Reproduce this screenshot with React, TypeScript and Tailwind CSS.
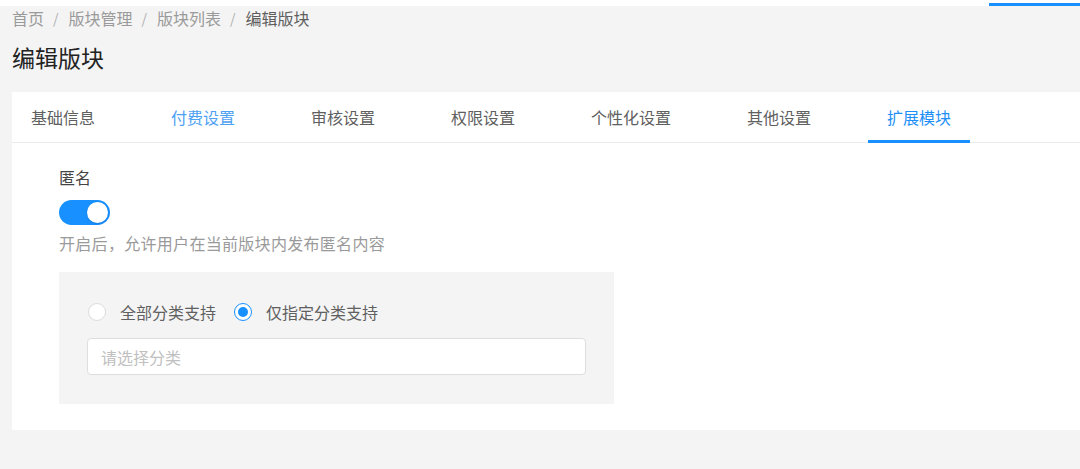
import { useState } from 'react';

const TABS = ['基础信息', '付费设置', '审核设置', '权限设置', '个性化设置', '其他设置', '扩展模块'];

const FONT = { fontFamily: '"Noto Sans CJK SC", "Noto Sans", sans-serif' };

function Breadcrumb() {
  const items = ['首页', '版块管理', '版块列表', '编辑版块'];
  return (
    <div className="flex h-6 items-center px-3 text-base leading-6 text-[#9a9a9a]">
      {items.map((item, i) => (
        <span key={item} className="flex items-center">
          {i > 0 && <span className="ml-[9px] mr-[10px] text-sm text-[#b0b0b0]">/</span>}
          <span className={i === items.length - 1 ? 'text-[#5f5f5f]' : ''}>{item}</span>
        </span>
      ))}
    </div>
  );
}

function Tabs({ active }: { active: number }) {
  return (
    <div className="flex h-[51px] gap-[38px] border-b border-[#ececec]">
      {TABS.map((tab, i) => (
        <div
          key={tab}
          className={`relative flex items-center px-[19px] text-base ${
            i === active ? 'text-[#1e8ff7]' : i === 1 ? 'text-[#4ea1f3]' : 'text-[#606060]'
          }`}
        >
          {tab}
          {i === active && <div className="absolute bottom-[-1px] left-0 right-0 h-[3px] bg-[#1890ff]" />}
        </div>
      ))}
    </div>
  );
}

function Radio({ checked, label, onClick }: { checked: boolean; label: string; onClick: () => void }) {
  return (
    <label className="flex cursor-pointer items-center" onClick={onClick}>
      <span
        className={`flex h-[18px] w-[18px] items-center justify-center rounded-full border bg-white ${
          checked ? 'border-[#1890ff]' : 'border-[#dcdcdc]'
        }`}
      >
        {checked && <span className="h-[10px] w-[10px] rounded-full bg-[#1890ff]" />}
      </span>
      <span className="ml-[14px] text-base text-[#606060]">{label}</span>
    </label>
  );
}

export default function App() {
  const [enabled, setEnabled] = useState(true);
  const [scope, setScope] = useState<'all' | 'some'>('some');

  return (
    <div className="min-h-[469px] bg-[#f4f4f4]" style={FONT}>
      <div className="relative h-[6px] bg-white">
        <div className="absolute right-0 top-[3px] h-[3px] w-[91px] bg-[#1890ff]" />
      </div>
      <Breadcrumb />
      <div className="flex h-[62px] items-center px-3 pb-[8px] text-[23px] text-[#222]">编辑版块</div>

      <div className="ml-3 h-[338px] bg-white">
        <Tabs active={6} />

        <div className="px-[47px] pt-[22px]">
          <div className="text-base leading-6 text-[#444]">匿名</div>
          <button
            onClick={() => setEnabled(!enabled)}
            className={`mt-[11px] flex h-[25px] w-[51px] items-center rounded-full px-[2px] ${
              enabled ? 'justify-end bg-[#1890ff]' : 'justify-start bg-[#ccc]'
            }`}
          >
            <span className="h-[21px] w-[21px] rounded-full bg-white shadow" />
          </button>
          <div className="mt-[6px] text-base leading-6 tracking-[0.3px] text-[#9a9a9a]">开启后，允许用户在当前版块内发布匿名内容</div>

          <div className="mt-[17px] w-[555px] bg-[#f4f4f4] px-[28px] pt-[29px] pb-[29px]">
            <div className="flex h-[22px] items-center gap-[18px] pl-px">
              <Radio checked={scope === 'all'} label="全部分类支持" onClick={() => setScope('all')} />
              <Radio checked={scope === 'some'} label="仅指定分类支持" onClick={() => setScope('some')} />
            </div>
            <input
              placeholder="请选择分类"
              className="mt-[15px] h-[37px] w-[499px] rounded border border-[#dedede] bg-white px-[13px] text-base text-[#333] placeholder-[#c0c0c0] outline-none"
            />
          </div>
        </div>
      </div>
    </div>
  );
}
